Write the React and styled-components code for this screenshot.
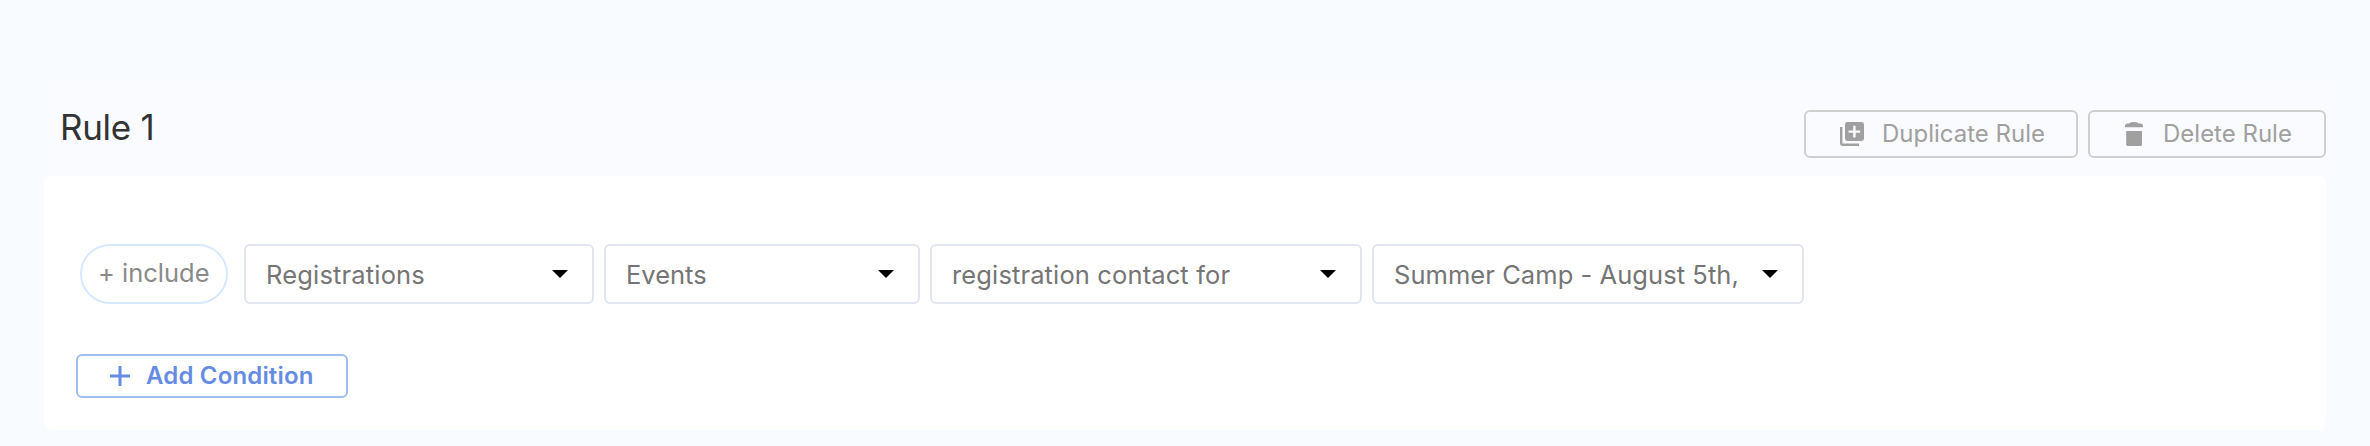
import React from "react";
import styled, { createGlobalStyle } from "styled-components";

const GlobalStyle = createGlobalStyle`
  * { box-sizing: border-box; }
  body {
    margin: 0;
    background: #f8fbff;
    font-family: Inter, "Liberation Sans", sans-serif;
  }
`;

const Page = styled.main`
  height: 446px;
  padding: 76px 44px 0;
  overflow: hidden;
`;

const RuleSection = styled.section`
  background: #fafbff;
  border-radius: 8px;
`;

const RuleHeader = styled.header`
  display: flex;
  justify-content: space-between;
  align-items: flex-start;
  height: 100px;
  padding: 34px 0 0 16px;
`;

const RuleTitle = styled.h2`
  margin: -1px 0 0;
  font-size: 35px;
  font-weight: 400;
  line-height: 36px;
  letter-spacing: -0.3px;
  color: #333;
`;

const Actions = styled.div`
  display: flex;
  gap: 10px;
`;

const ActionButton = styled.button`
  display: flex;
  align-items: center;
  width: ${(p) => p.$width}px;
  height: 48px;
  padding: 0 0 0 ${(p) => p.$inset}px;
  border: 2px solid #cfcfcf;
  border-radius: 6px;
  background: transparent;
  color: #a0a0a0;
  font: 400 24px/44px Inter, sans-serif;
  letter-spacing: 0;
  white-space: nowrap;

  svg { flex: none; margin-right: ${(p) => p.$gap}px; }
`;

const RuleBody = styled.div`
  height: 254px;
  padding: 68px 32px 0;
  border-radius: 8px;
  background: #fff;
`;

const ConditionRow = styled.div`
  display: flex;
  gap: 10px;
  padding-left: 4px;
`;

const IncludePill = styled.button`
  width: 148px;
  height: 60px;
  margin-right: 6px;
  padding: 0 0 2px 16px;
  border: 2px solid #d8e8ff;
  border-radius: 30px;
  background: #fff;
  color: #8a8a8a;
  font: 400 25.5px/54px Inter, sans-serif;
  letter-spacing: 0;
  text-align: left;
  white-space: nowrap;
`;

const Select = styled.div`
  display: flex;
  justify-content: space-between;
  align-items: center;
  width: ${(p) => p.$width}px;
  height: 60px;
  padding: 0 24px 0 20px;
  border: 2px solid #e1e5f2;
  border-radius: 6px;
  background: #fff;
`;

const SelectValue = styled.span`
  padding-top: 2px;
  font-size: 25.5px;
  line-height: 54px;
  letter-spacing: ${(p) => p.$tracking}px;
  color: #757575;
  white-space: nowrap;
`;

const Caret = styled.svg`
  flex: none;
  width: 16px;
  height: 8px;
`;

const AddButton = styled.button`
  display: flex;
  align-items: center;
  width: 272px;
  height: 44px;
  margin-top: 50px;
  padding: 0 0 0 32px;
  border: 2px solid #a3bbef;
  border-radius: 6px;
  background: #fff;
  color: #668ce2;
  font: 600 24px/40px Inter, sans-serif;
  letter-spacing: 0.17px;
  white-space: nowrap;

  svg { flex: none; margin-right: 16px; }
`;

const DuplicateIcon = () => (
  <svg width="24" height="24" viewBox="0 0 24 24" fill="currentColor" aria-hidden="true">
    <path d="M0 5h2.4v16.600H19V24H2.400A2.400 2.400 0 0 1 0 21.600z" />
    <path
      fillRule="evenodd"
      d="M7.400 0h14.200A2.400 2.400 0 0 1 24 2.400v14.200a2.400 2.400 0 0 1-2.400 2.400H7.400a2.400 2.400 0 0 1-2.400-2.400V2.400A2.400 2.400 0 0 1 7.400 0zM13.200 3.800v4.600H8.600v2.400h4.600V15.400h2.400V10.800H20.200V8.400H15.600V3.800z"
    />
  </svg>
);

const TrashIcon = () => (
  <svg width="18" height="24" viewBox="0 0 18 24" fill="currentColor" aria-hidden="true">
    <path d="M0 5.200V4A2.600 2.600 0 0 1 2.600 1.400H4Q6 0 9 0T14 1.400H15.400A2.600 2.600 0 0 1 18 4V5.200z" />
    <path d="M1.200 9H17V22.400a1.600 1.600 0 0 1-1.600 1.600H2.800a1.600 1.600 0 0 1-1.600-1.600z" />
  </svg>
);

const PlusIcon = () => (
  <svg width="20" height="20" viewBox="0 0 20 20" fill="currentColor" aria-hidden="true">
    <path d="M8.500 0h3v8.500H20v3h-8.500V20h-3v-8.500H0v-3h8.500z" />
  </svg>
);

const fields = [
  { value: "Registrations", width: 350, tracking: 0.17 },
  { value: "Events", width: 316, tracking: 0 },
  { value: "registration contact for", width: 432, tracking: 0.13 },
  { value: "Summer Camp - August 5th,", width: 432, tracking: 0.06 },
];

export default function App() {
  return (
    <Page>
      <GlobalStyle />
      <RuleSection>
        <RuleHeader>
          <RuleTitle>Rule 1</RuleTitle>
          <Actions>
            <ActionButton $width={274} $inset={34} $gap={18}>
              <DuplicateIcon />
              <span>Duplicate Rule</span>
            </ActionButton>
            <ActionButton $width={238} $inset={35} $gap={20}>
              <TrashIcon />
              <span>Delete Rule</span>
            </ActionButton>
          </Actions>
        </RuleHeader>
        <RuleBody>
          <ConditionRow>
            <IncludePill>+ include</IncludePill>
            {fields.map((f) => (
              <Select key={f.value} $width={f.width}>
                <SelectValue $tracking={f.tracking}>{f.value}</SelectValue>
                <Caret viewBox="0 0 16 8" aria-hidden="true">
                  <path d="M0 0h16L8 8z" fill="#000" />
                </Caret>
              </Select>
            ))}
          </ConditionRow>
          <AddButton>
            <PlusIcon />
            <span>Add Condition</span>
          </AddButton>
        </RuleBody>
      </RuleSection>
    </Page>
  );
}
